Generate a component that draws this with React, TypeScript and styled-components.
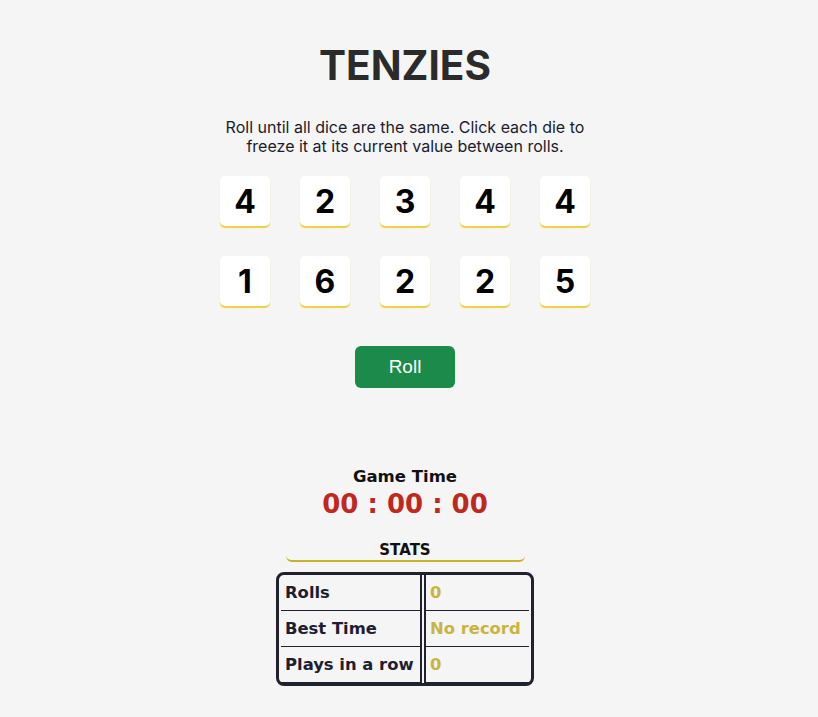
import styled, { createGlobalStyle } from "styled-components";

const GlobalStyle = createGlobalStyle`
  body {
    margin: 0;
    background: #f5f5f5;
    font-family: Inter, "Noto Sans", sans-serif;
  }
`

const Main = styled.main`
  display: flex;
  flex-direction: column;
  align-items: center;
  padding: 40px 8px 30px 0;
`

const Title = styled.h1`
  margin: 0;
  font-size: 40.5px;
  font-weight: 700;
  color: #2b2b2b;
  line-height: 52px;
`

const Instructions = styled.p`
  margin: 26px 0 0;
  width: 380px;
  text-align: center;
  font-size: 16px;
  line-height: 19px;
  color: #1b1b2f;
`

const DiceGrid = styled.div`
  margin-top: 20px;
  display: grid;
  grid-template-columns: repeat(5, 50px);
  gap: 30px;
`

const Die = styled.button<{ $held?: boolean }>`
  width: 50px;
  height: 50px;
  border: none;
  border-radius: 5px;
  background: ${p => p.$held ? "#59e391" : "#fff"};
  box-shadow: 0 2px 1px #f0d040;
  font-family: Inter, sans-serif;
  font-weight: 700;
  font-size: 32px;
  color: #000;
  padding: 0;
  cursor: pointer;
`

const RollButton = styled.button`
  margin-top: 40px;
  width: 100px;
  height: 42px;
  border: none;
  border-radius: 6px;
  background: #1c8a4a;
  color: #fff;
  font-family: "Liberation Sans", Arial, sans-serif;
  font-size: 19px;
  cursor: pointer;
`

const statsFont = `"Trebuchet MS", "DejaVu Sans", sans-serif`

const Timer = styled.section`
  margin-top: 78px;
  display: flex;
  flex-direction: column;
  align-items: center;
  font-family: ${statsFont};
  font-weight: 700;
`

const TimerLabel = styled.h3`
  margin: 0;
  font-size: 16.5px;
  line-height: 22px;
  color: #111;
`

const TimerValue = styled.div`
  font-size: 26px;
  line-height: 33px;
  color: #c0281e;
`

const StatsHeading = styled.h4`
  margin: 19px 0 0;
  width: 239px;
  text-align: center;
  font-family: ${statsFont};
  font-size: 15px;
  font-weight: 700;
  line-height: 20px;
  color: #111;
  border-bottom: 2px solid #c8b22a;
  border-radius: 0 0 6px 6px;
`

const StatsTable = styled.table`
  margin-top: 10px;
  border: 3px solid #22222e;
  border-radius: 8px;
  border-collapse: separate;
  border-spacing: 2px 0;
  font-family: ${statsFont};
  font-size: 16.4px;
  font-weight: 700;
`

const Cell = styled.td<{ $value?: boolean }>`
  height: 35px;
  padding: 0 4px;
  border-bottom: 1px solid #22222e;
  white-space: nowrap;
  ${p => p.$value
    ? "border-left: 2px solid #22222e; color: #c9b440; width: 95px;"
    : "border-right: 2px solid #22222e; color: #1e1e30; width: 131px;"}
`

const dice = [4, 2, 3, 4, 4, 1, 6, 2, 2, 5]

const stats = [
  ["Rolls", "0"],
  ["Best Time", "No record"],
  ["Plays in a row", "0"],
]

export default function App() {
  return (
    <>
      <GlobalStyle/>
      <Main>
        <Title>TENZIES</Title>
        <Instructions>
          Roll until all dice are the same. Click each die to freeze it at its current value between rolls.
        </Instructions>
        <DiceGrid>
          {dice.map((d, i) => <Die key={i}>{d}</Die>)}
        </DiceGrid>
        <RollButton>Roll</RollButton>
        <Timer>
          <TimerLabel>Game Time</TimerLabel>
          <TimerValue>00 : 00 : 00</TimerValue>
        </Timer>
        <StatsHeading>STATS</StatsHeading>
        <StatsTable>
          <tbody>
            {stats.map(([label, value]) => (
              <tr key={label}>
                <Cell>{label}</Cell>
                <Cell $value>{value}</Cell>
              </tr>
            ))}
          </tbody>
        </StatsTable>
      </Main>
    </>
  )
}
